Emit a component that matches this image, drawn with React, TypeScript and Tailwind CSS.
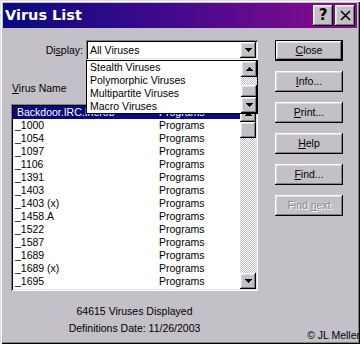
const raised =
  'shadow-[inset_-1px_-1px_#000000,inset_1px_1px_#ffffff,inset_-2px_-2px_#808080,inset_2px_2px_#dfdfdf]';
const sunken =
  'shadow-[inset_1px_1px_#808080,inset_-1px_-1px_#ffffff,inset_2px_2px_#000000,inset_-2px_-2px_#dfdfdf]';
const checker =
  'bg-[image:repeating-conic-gradient(#c4c0c8_0%_25%,#ffffff_0%_50%)] bg-[length:2px_2px]';

const rows = [
  'Backdoor.IRC.Inerob',
  '_1000',
  '_1054',
  '_1097',
  '_1106',
  '_1391',
  '_1403',
  '_1403 (x)',
  '_1458.A',
  '_1522',
  '_1587',
  '_1689',
  '_1689 (x)',
  '_1695',
];

const Arrow = ({ up }: { up?: boolean }) => (
  <svg width="7" height="4" viewBox="0 0 7 4" shapeRendering="crispEdges">
    <path
      d={up ? 'M3 0h1v1H3zM2 1h3v1H2zM1 2h5v1H1zM0 3h7v1H0z' : 'M0 0h7v1H0zM1 1h5v1H1zM2 2h3v1H2zM3 3h1v1H3z'}
      fill="#000"
    />
  </svg>
);

const ScrollBtn = ({ up }: { up?: boolean }) => (
  <div className={`w-[16px] h-[16px] shrink-0 bg-[#c4c0c8] flex items-center justify-center ${raised}`}>
    <Arrow up={up} />
  </div>
);

const Btn = ({ children, def, disabled }: { children: React.ReactNode; def?: boolean; disabled?: boolean }) => (
  <div className={`h-[21px] w-[68px] ${def ? 'border border-black' : ''}`}>
    <div
      className={`h-full w-full flex items-center justify-center bg-[#c4c0c8] ${raised} ${
        disabled ? 'text-[#8c8890] [text-shadow:1px_1px_0_#ffffff]' : 'text-black'
      }`}
    >
      <span>{children}</span>
    </div>
  </div>
);

const U = ({ children }: { children: React.ReactNode }) => (
  <span className="underline underline-offset-[1px]">{children}</span>
);

export default function App() {
  return (
    <div
      className="relative w-[360px] h-[344px] overflow-hidden bg-[#c4c0c8] p-[3px] shadow-[inset_1px_1px_#dfdfdf,inset_2px_2px_#ffffff,inset_-1px_-1px_#000000,inset_-2px_-2px_#808080] text-[10.5px] leading-[13px] text-black"
      style={{ fontFamily: '"Liberation Sans", Arial, sans-serif' }}
    >
      {/* title bar */}
      <div className="h-[25px] flex items-center justify-between pl-[2px] pr-[2px] bg-[linear-gradient(90deg,#0a0a80,#3e0a8c_45%,#8c0c8c)]">
        <span
          className="text-white font-bold text-[14.5px] leading-none"
          style={{ fontFamily: '"DejaVu Sans", Verdana, sans-serif' }}
        >
          Virus List
        </span>
        <div className="flex gap-[2px]">
          <div className={`w-[20px] h-[21px] bg-[#c4c0c8] flex items-center justify-center ${raised}`}>
            <span className="font-bold text-[15px] leading-none" style={{ fontFamily: '"DejaVu Sans", sans-serif' }}>
              ?
            </span>
          </div>
          <div className={`w-[20px] h-[21px] bg-[#c4c0c8] flex items-center justify-center ${raised}`}>
            <svg width="11" height="11" viewBox="0 0 11 11">
              <path d="M1 1L10 10M10 1L1 10" stroke="#000" strokeWidth="1.6" />
            </svg>
          </div>
        </div>
      </div>

      {/* body */}
      <div className="flex pt-[12px] pl-[8px]">
        <div className="w-[247px] flex flex-col">
          <div className="flex h-[20px] items-center">
            <div className="w-[75px] text-right pr-[3px]">
              Di<U>s</U>play:
            </div>
            <div className="relative w-[172px] h-[20px]">
              <div className={`h-full w-full bg-white p-[2px] flex items-center ${sunken}`}>
                <span className="flex-1 pl-[2px]">All Viruses</span>
                <ScrollBtn />
              </div>
              {/* open dropdown */}
              <div className="absolute top-full left-0 w-[172px] h-[54px] z-10 border border-black bg-white flex">
                <div className="flex-1 flex flex-col">
                  {['Stealth Viruses', 'Polymorphic Viruses', 'Multipartite Viruses', 'Macro Viruses'].map((v) => (
                    <div key={v} className="h-[13px] pl-[3px] whitespace-nowrap">
                      {v}
                    </div>
                  ))}
                </div>
                <div className="w-[16px] flex flex-col">
                  <ScrollBtn up />
                  <div className={`h-[8px] ${checker}`} />
                  <div className={`h-[12px] bg-[#c4c0c8] ${raised}`} />
                  <ScrollBtn />
                </div>
              </div>
            </div>
          </div>

          <div className="mt-[22px] h-[13px] pl-[1px]">
            <U>V</U>irus Name
          </div>

          <div className={`mt-[9px] h-[187px] p-[2px] bg-white flex ${sunken}`}>
            <div className="flex-1 flex flex-col">
              {rows.map((r, i) => (
                <div
                  key={r}
                  className={`h-[13px] flex whitespace-nowrap ${i === 0 ? 'bg-[#0a0a80] text-white' : ''}`}
                >
                  <span className={`w-[146px] ${i === 0 ? 'pl-[4px]' : 'pl-[2px]'}`}>{r}</span>
                  <span>Programs</span>
                </div>
              ))}
            </div>
            <div className="w-[16px] flex flex-col">
              <ScrollBtn up />
              <div className={`h-[16px] bg-[#c4c0c8] ${raised}`} />
              <div className={`flex-1 ${checker}`} />
              <ScrollBtn />
            </div>
          </div>

          <div className="mt-[14px] text-center">64615 Viruses Displayed</div>
          <div className="mt-[4px] text-center">Definitions Date: 11/26/2003</div>
        </div>

        <div className="ml-[17px] flex flex-col gap-[10px]">
          <Btn def>
            <U>C</U>lose
          </Btn>
          <Btn>
            <U>I</U>nfo...
          </Btn>
          <Btn>
            <U>P</U>rint...
          </Btn>
          <Btn>
            <U>H</U>elp
          </Btn>
          <Btn>
            <U>F</U>ind...
          </Btn>
          <Btn disabled>
            Find <U>n</U>ext
          </Btn>
        </div>
      </div>

      <div className="absolute right-0 bottom-[2px] whitespace-nowrap">© JL Meller</div>
    </div>
  );
}
